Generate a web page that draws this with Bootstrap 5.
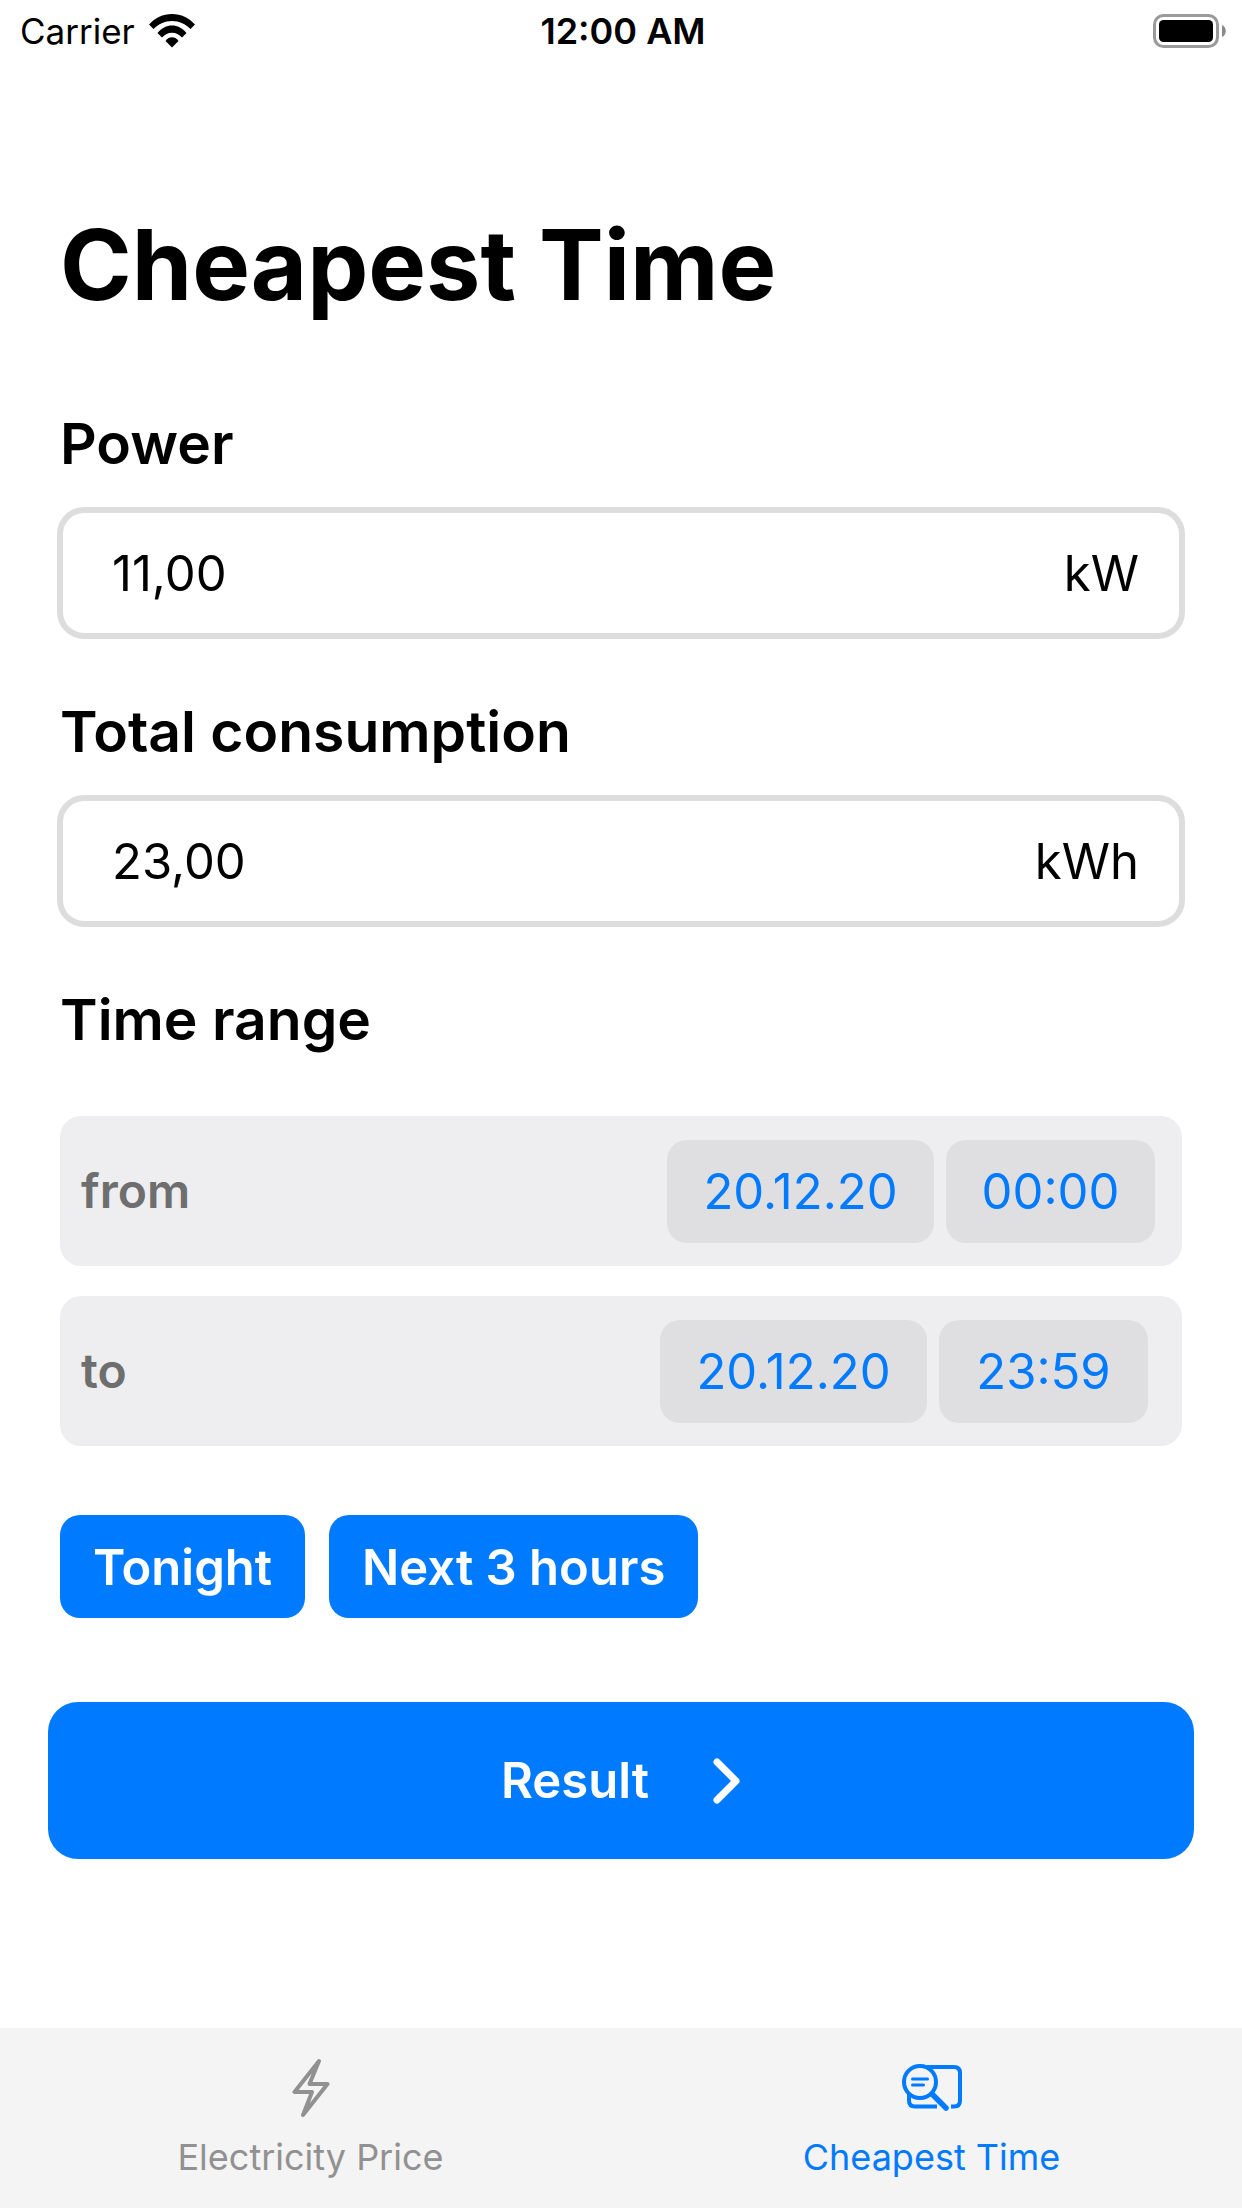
<!DOCTYPE html>
<html lang="en">
<head>
<meta charset="utf-8">
<meta name="viewport" content="width=device-width, initial-scale=1">
<title>Cheapest Time</title>
<link rel="stylesheet" href="https://cdn.jsdelivr.net/npm/bootstrap@5.3.0/dist/css/bootstrap.min.css">
<style>
  :root { --app-blue: #007aff; }
  body { font-family: Inter, "Liberation Sans", sans-serif; font-size: 49px; line-height: 60px; color: #000; background: #fff; }
  svg { display: block; flex: none; }
  .status-bar { height: 60px; padding: 2px 16px 0; font-size: 36px; line-height: 60px; }
  .status-side { flex: 1 1 0; gap: 14px; }
  .status-carrier { font-size: 35px; }
  .screen { padding: 144px 48px 48px; }
  .screen-form { padding: 0 12px; }
  .screen-title { font-size: 97px; line-height: 122px; font-weight: 700; margin: 0 0 82px; }
  .section-label { display: block; font-size: 57px; line-height: 72px; font-weight: 600; margin: 0 0 27px; }
  .value-box { height: 132px; margin: 0 -3px 57px; padding: 2px 40px 0 49px; border: 6px solid #ddd; border-radius: 27px; }
  .value-box .form-control { font-size: 49px; line-height: 60px; color: #000; min-width: 0; }
  .time-range { margin-top: 60px; gap: 30px; }
  .time-line { height: 150px; padding: 0 27px 0 21px; border-radius: 21px; background: #eeeef0; color: #6e6e6e; }
  .time-line-end { padding-right: 34px; }
  .time-name { font-size: 48px; font-weight: 600; }
  .pick { height: 103px; padding: 2px 0 0; border-radius: 20px; background: #dfdfe1; color: var(--app-blue); font-size: 49px; line-height: 60px; }
  .pick-date { width: 267px; }
  .pick-time { width: 209px; }
  .pick:hover { background: #d4d4d7; color: var(--app-blue); }
  .btn-app { --bs-btn-bg: var(--app-blue); --bs-btn-border-color: var(--app-blue); --bs-btn-color: #fff; --bs-btn-hover-bg: #006ae0; --bs-btn-hover-color: #fff; --bs-btn-active-bg: #005fc8; --bs-btn-active-color: #fff; border: 0; font-size: 49px; line-height: 60px; font-weight: 600; }
  .quick-picks { margin: 69px 0 84px; gap: 24px; }
  .quick-picks .btn { height: 103px; padding: 2px 33px 0; border-radius: 20px; }
  .btn-result { height: 157px; border-radius: 30px; gap: 64px; }
  .tab-bar { height: 180px; background: #f4f4f4; font-size: 36px; line-height: 45px; }
  .tab-link { padding-top: 30px; gap: 17px; color: #919191; }
  .tab-link.active { color: var(--app-blue); }
</style>
<script src="https://cdn.jsdelivr.net/npm/bootstrap@5.3.0/dist/js/bootstrap.bundle.min.js"></script>
</head>
<body>
<div class="d-flex flex-column min-vh-100">
  <header class="status-bar d-flex align-items-center">
    <div class="status-side d-flex align-items-center ps-1">
      <span class="status-carrier">Carrier</span>
      <svg width="46" height="34" viewBox="0 0 46 34" aria-hidden="true">
        <path d="M0 10.500C6 4 14 0 23 0s17 4 23 10.500L41.500 15C36.500 10 30.500 7 23 7S9.500 10 4.500 15z"/>
        <path d="M8.500 19C12.500 14 17.500 11.500 23 11.500S33.500 14 37.500 19L33 23.500C30 20.500 27 18.800 23 18.800S16 20.500 13 23.500z"/>
        <path d="M16.500 27C18.500 24.300 20.500 23.300 23 23.300s4.500 1 6.500 3.700L23 33.500z"/>
      </svg>
    </div>
    <div class="fw-semibold">12:00 AM</div>
    <div class="status-side d-flex justify-content-end">
      <svg width="73" height="34" viewBox="0 0 73 34" aria-hidden="true">
        <rect x="1.500" y="1.500" width="63" height="31" rx="9" fill="none" stroke="#9a9a9a" stroke-width="3"/>
        <rect x="6" y="6" width="54" height="22" rx="4.500"/>
        <path d="M69 11c5 2 5 10 0 12z" fill="#8a8a8a"/>
      </svg>
    </div>
  </header>

  <main class="screen flex-grow-1">
    <form class="screen-form">
      <h1 class="screen-title">Cheapest Time</h1>

      <label class="section-label" for="power">Power</label>
      <div class="value-box d-flex align-items-center">
        <input class="form-control border-0 p-0 shadow-none bg-transparent" id="power" type="text" inputmode="decimal" value="11,00">
        <span>kW</span>
      </div>

      <label class="section-label" for="consumption">Total consumption</label>
      <div class="value-box d-flex align-items-center">
        <input class="form-control border-0 p-0 shadow-none bg-transparent" id="consumption" type="text" inputmode="decimal" value="23,00">
        <span>kWh</span>
      </div>

      <h2 class="section-label mb-0">Time range</h2>
      <div class="time-range d-flex flex-column">
        <div class="time-line d-flex align-items-center justify-content-between" role="group" aria-labelledby="from-name">
          <span class="time-name" id="from-name">from</span>
          <div class="d-flex gap-2">
            <button class="btn border-0 pick pick-date me-1" type="button">20.12.20</button>
            <button class="btn border-0 pick pick-time" type="button">00:00</button>
          </div>
        </div>
        <div class="time-line time-line-end d-flex align-items-center justify-content-between" role="group" aria-labelledby="to-name">
          <span class="time-name" id="to-name">to</span>
          <div class="d-flex gap-2">
            <button class="btn border-0 pick pick-date me-1" type="button">20.12.20</button>
            <button class="btn border-0 pick pick-time" type="button">23:59</button>
          </div>
        </div>
      </div>

      <div class="quick-picks d-flex">
        <button class="btn btn-app" type="button">Tonight</button>
        <button class="btn btn-app" type="button">Next 3 hours</button>
      </div>
    </form>

    <button class="btn btn-app btn-result w-100 d-flex align-items-center justify-content-center" type="button">
      <span>Result</span>
      <svg width="28" height="46" viewBox="0 0 28 46" fill="none" stroke="#fff" stroke-width="7" stroke-linecap="round" stroke-linejoin="round" aria-hidden="true"><path d="M4 4l19 19L4 42"/></svg>
    </button>
  </main>

  <nav class="tab-bar">
    <div class="row g-0">
      <div class="col">
        <a class="tab-link d-flex flex-column align-items-center text-decoration-none" href="#price">
          <svg width="38" height="60" viewBox="0 0 38 60" fill="none" stroke="currentColor" stroke-width="4" stroke-linejoin="round" aria-hidden="true"><path d="M27 3L2.500 34H20L11 57L35.500 26H17.500z"/></svg>
          <span>Electricity Price</span>
        </a>
      </div>
      <div class="col">
        <a class="tab-link active d-flex flex-column align-items-center text-decoration-none" href="#cheapest" aria-current="page">
          <svg width="60" height="60" viewBox="0 0 60 60" fill="none" stroke="currentColor" stroke-width="4" stroke-linecap="round" aria-hidden="true">
            <circle cx="18" cy="24" r="16"/>
            <path d="M10.500 21h15M10.500 27h11" stroke-width="3"/>
            <path d="M31 37L44 50" stroke-width="5.500"/>
            <path d="M25 9H52Q58 9 58 15V42.500Q58 48.500 52 48.500H49" stroke-linecap="butt"/>
            <path d="M7 36V42.500Q7 48.500 13 48.500H35" stroke-linecap="butt"/>
          </svg>
          <span>Cheapest Time</span>
        </a>
      </div>
    </div>
  </nav>
</div>
</body>
</html>
